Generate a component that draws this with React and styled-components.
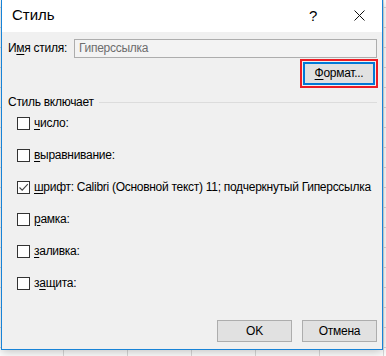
import React from 'react'
import styled, { createGlobalStyle } from 'styled-components'

const GlobalStyle = createGlobalStyle`
  html, body {
    margin: 0;
    padding: 0;
    width: 386px;
    height: 356px;
    overflow: hidden;
    background-color: #ffffff;
    background-image:
      linear-gradient(to right, #dadada 1px, transparent 1px),
      linear-gradient(to bottom, #dadada 1px, transparent 1px);
    background-size: 64px 20px;
    background-position: -1px -13px;
    font-family: 'Liberation Sans', Arial, sans-serif;
    font-size: 12px;
    line-height: 15px;
    letter-spacing: -0.28px;
    color: #000;
  }
`

const Dialog = styled.div`
  box-sizing: border-box;
  margin-left: 1px;
  width: 382px;
  height: 350px;
  border: 1px solid #1883d7;
  border-top: none;
  background: #f0f0f0;
  display: flex;
  flex-direction: column;
  box-shadow: 0 2px 10px rgba(0, 0, 0, 0.25);
`

const TitleBar = styled.div`
  height: 32px;
  flex: none;
  background: #fff;
  display: flex;
  align-items: center;
  padding-left: 10px;
`

const Title = styled.div`
  flex: 1;
  font-size: 15px;
  line-height: 18px;
  letter-spacing: 0;
  margin-top: -2px;
`

const TitleButton = styled.div`
  width: 46px;
  height: 30px;
  display: flex;
  align-items: center;
  justify-content: center;
  font-size: 15px;
  margin-top: -2px;
`

const Body = styled.div`
  flex: 1;
  display: flex;
  flex-direction: column;
  padding: 7px 5px 7px 6px;
`

const NameRow = styled.div`
  display: flex;
  align-items: center;
  height: 19px;
`

const NameLabel = styled.div`
  width: 66px;
  flex: none;
`

const NameInput = styled.div`
  box-sizing: border-box;
  flex: 1;
  height: 19px;
  border: 1px solid #adadad;
  background: #f3f3f3;
  color: #6d6d6d;
  padding-left: 4px;
  display: flex;
  align-items: center;
`

const FormatRow = styled.div`
  display: flex;
  justify-content: flex-end;
  margin-top: 1px;
  margin-right: -1px;
`

const Highlight = styled.div`
  border: 2px solid #ed1c24;
  padding: 1px;
`

const Button = styled.div`
  box-sizing: border-box;
  width: ${({ $w }) => $w || 75}px;
  height: ${({ $h }) => $h || 22}px;
  background: #e1e1e1;
  border: 1px solid ${({ $focused }) => ($focused ? '#0078d7' : '#adadad')};
  box-shadow: ${({ $focused }) => ($focused ? 'inset 0 0 0 1px #0078d7' : 'none')};
  display: flex;
  align-items: center;
  justify-content: center;
`

const Group = styled.div`
  margin-top: 7px;
  display: flex;
  align-items: center;
  gap: 5px;
`

const GroupLine = styled.div`
  flex: 1;
  height: 1px;
  background: #dcdcdc;
`

const Options = styled.div`
  display: flex;
  flex-direction: column;
  margin-top: -3px;
  padding-left: 9px;
`

const Option = styled.div`
  height: 32px;
  display: flex;
  align-items: center;
  gap: 4px;
  white-space: nowrap;
`

const Box = styled.div`
  box-sizing: border-box;
  width: 13px;
  height: 13px;
  flex: none;
  border: 1px solid #333;
  background: #fff;
  display: flex;
  align-items: center;
  justify-content: center;
`

const Footer = styled.div`
  margin-top: auto;
  display: flex;
  justify-content: flex-end;
  gap: 10px;
`

const Key = styled.span`
  text-decoration: underline;
  text-underline-offset: 2px;
`

const options = [
  { key: 'ч', rest: 'исло:' },
  { key: 'в', rest: 'ыравнивание:' },
  { key: 'ш', rest: 'рифт: Calibri (Основной текст) 11; подчеркнутый Гиперссылка', checked: true },
  { key: 'р', rest: 'амка:' },
  { key: 'з', rest: 'аливка:' },
  { pre: 'з', key: 'а', rest: 'щита:' },
]

export default function App() {
  return (
    <>
      <GlobalStyle />
      <Dialog>
        <TitleBar>
          <Title>Стиль</Title>
          <TitleButton>?</TitleButton>
          <TitleButton>
            <svg width="11" height="11" viewBox="0 0 11 11">
              <path d="M0.5 0.5 L10.5 10.5 M10.5 0.5 L0.5 10.5" stroke="#111" strokeWidth="1" />
            </svg>
          </TitleButton>
        </TitleBar>
        <Body>
          <NameRow>
            <NameLabel>
              И<Key>м</Key>я стиля:
            </NameLabel>
            <NameInput>Гиперссылка</NameInput>
          </NameRow>
          <FormatRow>
            <Highlight>
              <Button $w={72} $h={23} $focused>
                <Key>Ф</Key>ормат...
              </Button>
            </Highlight>
          </FormatRow>
          <Group>
            <span>Стиль включает</span>
            <GroupLine />
          </Group>
          <Options>
            {options.map((o, i) => (
              <Option key={i}>
                <Box>
                  {o.checked && (
                    <svg width="11" height="11" viewBox="0 0 11 11">
                      <path d="M1.5 5.5 L4.2 8.2 L9.8 2.2" fill="none" stroke="#444" strokeWidth="1.1" />
                    </svg>
                  )}
                </Box>
                <span>
                  {o.pre}
                  <Key>{o.key}</Key>
                  {o.rest}
                </span>
              </Option>
            ))}
          </Options>
          <Footer>
            <Button>OK</Button>
            <Button>Отмена</Button>
          </Footer>
        </Body>
      </Dialog>
    </>
  )
}
